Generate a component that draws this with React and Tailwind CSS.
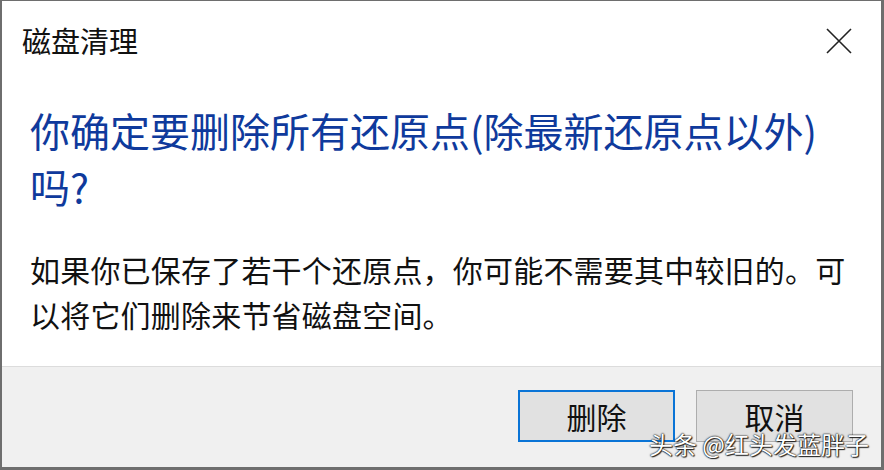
export default function App() {
  return (
    <div
      className="relative w-[884px] h-[470px] bg-white border-l-2 border-t border-r-[3px] border-b-[3px] border-[#6e6e6e] flex flex-col text-[#111]"
      style={{ fontFamily: '"Noto Sans CJK SC", "Noto Sans", sans-serif' }}
    >
      <div className="h-[79px] flex items-center justify-between pl-[20px] pr-[28px]">
        <span className="text-[29px] leading-none">磁盘清理</span>
        <svg width="28" height="28" viewBox="0 0 28 28" className="text-[#222]">
          <path d="M2 2 L26 26 M26 2 L2 26" stroke="currentColor" strokeWidth="1.6" fill="none" />
        </svg>
      </div>

      <div className="px-[28px]">
        <h1 className="mt-[22px] text-[40px] leading-[56px] text-[#0f3a9c] font-normal">
          你确定要删除所有还原点(除最新还原点以外)
          <br />
          吗?
        </h1>
        <p className="mt-[33px] text-[30px] leading-[45px] tracking-[0.2px]">
          如果你已保存了若干个还原点，你可能不需要其中较旧的。可
          <br />
          以将它们删除来节省磁盘空间。
        </p>
      </div>

      <div className="mt-auto h-[101px] bg-[#f0f0f0] border-t border-[#dcdcdc] flex justify-end items-start pt-[23px] pr-[28px] gap-[21px]">
        <button className="w-[157px] h-[52px] bg-[#e1e1e1] border-2 border-[#0a74d6] text-[30px] leading-none">
          删除
        </button>
        <button className="w-[157px] h-[52px] bg-[#e1e1e1] border border-[#adadad] text-[30px] leading-none">
          取消
        </button>
      </div>

      <div className="absolute right-[12px] bottom-[11px] text-[24px] leading-none text-white [text-shadow:0_0_2px_#000,0_0_1px_#000,1px_1px_1px_#333]">
        头条 @红头发蓝胖子
      </div>
    </div>
  );
}
